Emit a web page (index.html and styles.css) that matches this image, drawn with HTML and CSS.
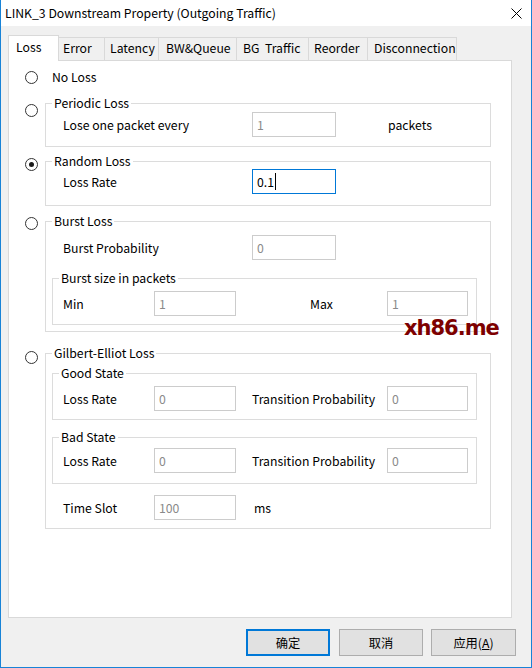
FILE: index.html
```html
<!DOCTYPE html>
<html lang="zh-CN">
<head>
    <meta charset="UTF-8">
    <title>LINK_3 Downstream Property (Outgoing Traffic)</title>
    <link rel="stylesheet" href="styles.css">
</head>
<body>
    <div class="window">
        <div class="titlebar">
            <span class="title">LINK_3 Downstream Property (Outgoing Traffic)</span>
            <svg class="close" width="11" height="11" viewBox="0 0 11 11">
                <path d="M0.5 0.5 L10.5 10.5 M10.5 0.5 L0.5 10.5" stroke="#000" stroke-width="1" fill="none"/>
            </svg>
        </div>
        <div class="dialog">
            <div class="tabs">
                <div class="tab tab-loss active">Loss</div>
                <div class="tab tab-error">Error</div>
                <div class="tab tab-latency">Latency</div>
                <div class="tab tab-bw">BW&amp;Queue</div>
                <div class="tab tab-bg">BG&nbsp;&nbsp;Traffic</div>
                <div class="tab tab-reorder">Reorder</div>
                <div class="tab tab-disc">Disconnection</div>
            </div>
            <div class="panel">
                <!-- no loss -->
                <div class="option option-plain">
                    <span class="radio"></span>
                    <span>No Loss</span>
                </div>

                <!-- periodic -->
                <div class="option option-periodic">
                    <span class="radio"></span>
                    <fieldset class="group group-periodic">
                        <legend>Periodic Loss</legend>
                        <div class="row">
                            <span class="label-wide">Lose one packet every</span>
                            <div class="field">1</div>
                            <span class="unit">packets</span>
                        </div>
                    </fieldset>
                </div>

                <!-- random -->
                <div class="option option-random">
                    <span class="radio checked"></span>
                    <fieldset class="group group-random">
                        <legend>Random Loss</legend>
                        <div class="row">
                            <span class="label-wide">Loss Rate</span>
                            <div class="field focus">0.1<span class="caret"></span></div>
                        </div>
                    </fieldset>
                </div>

                <!-- burst -->
                <div class="option option-burst">
                    <span class="radio"></span>
                    <fieldset class="group group-burst">
                        <legend>Burst Loss</legend>
                        <div class="row">
                            <span class="label-wide">Burst Probability</span>
                            <div class="field">0</div>
                        </div>
                        <fieldset class="subgroup subgroup-size">
                            <legend>Burst size in packets</legend>
                            <div class="subrow">
                                <span class="label-short">Min</span>
                                <div class="field field-short">1</div>
                                <span class="label-second label-max">Max</span>
                                <div class="field field-last">1</div>
                            </div>
                        </fieldset>
                    </fieldset>
                </div>

                <!-- gilbert-elliot -->
                <div class="option option-gilbert">
                    <span class="radio"></span>
                    <fieldset class="group group-gilbert">
                        <legend>Gilbert-Elliot Loss</legend>
                        <fieldset class="subgroup subgroup-good">
                            <legend>Good State</legend>
                            <div class="subrow">
                                <span class="label-short">Loss Rate</span>
                                <div class="field field-short">0</div>
                                <span class="label-second">Transition Probability</span>
                                <div class="field field-last">0</div>
                            </div>
                        </fieldset>
                        <fieldset class="subgroup subgroup-bad">
                            <legend>Bad State</legend>
                            <div class="subrow">
                                <span class="label-short">Loss Rate</span>
                                <div class="field field-short">0</div>
                                <span class="label-second">Transition Probability</span>
                                <div class="field field-last">0</div>
                            </div>
                        </fieldset>
                        <div class="row row-slot">
                            <span class="label-short">Time Slot</span>
                            <div class="field field-short">100</div>
                            <span class="unit-ms">ms</span>
                        </div>
                    </fieldset>
                </div>
            </div>
            <div class="buttons">
                <div class="btn btn-default">确定</div>
                <div class="btn">取消</div>
                <div class="btn">应用(<u>A</u>)</div>
            </div>
        </div>
        <div class="watermark">xh86.me</div>
    </div>
</body>
</html>
```

FILE: styles.css
```css
body {
    margin: 0;
    font-family: "Noto Sans CJK SC", "Noto Sans", sans-serif;
    font-size: 12.25px;
    color: #000;
    background: #fff;
}
.window {
    position: relative;
    width: 532px;
    height: 668px;
    box-sizing: border-box;
    border: 1px solid #1883d7;
    border-top: 0;
    background: #f0f0f0;
}
.titlebar {
    height: 26px;
    background: #fff;
    display: flex;
    align-items: center;
    justify-content: space-between;
    padding: 0 9px 0 4px;
}
.close {
    display: block;
}
.dialog {
    padding: 9px 18px 0 7px;
}

/* tabs */
.tabs {
    display: flex;
    align-items: flex-end;
    height: 25px;
}
.tab {
    height: 23px;
    box-sizing: border-box;
    border: 1px solid #d9d9d9;
    border-bottom: 0;
    margin-left: -1px;
    padding-left: 5px;
    line-height: 21px;
    background: #f0f0f0;
    white-space: nowrap;
}
.tab.active {
    height: 26px;
    margin-left: 0;
    margin-bottom: -1px;
    line-height: 22px;
    background: #fff;
    position: relative;
    z-index: 1;
}
.tab-loss { width: 51px; padding-left: 7px; }
.tab-error { width: 47px; padding-left: 4px; }
.tab-latency { width: 55px; padding-left: 5px; }
.tab-bw { width: 79px; padding-left: 7px; }
.tab-bg { width: 73px; padding-left: 6px; }
.tab-reorder { width: 60px; padding-left: 5px; }
.tab-disc { width: 90px; padding-left: 6px; }

.panel {
    width: 504px;
    height: 558px;
    box-sizing: border-box;
    background: #fff;
    border: 1px solid #d9d9d9;
    padding: 8px 0 0 16px;
}

/* radio rows */
.option {
    display: flex;
    align-items: flex-start;
}
.option-plain {
    align-items: center;
    line-height: 16px;
}
.option-periodic { margin-top: 10px; }
.option-random { margin-top: 6px; }
.option-burst { margin-top: 7px; }
.option-gilbert { margin-top: 13px; }
.radio {
    flex: none;
    width: 13px;
    height: 13px;
    box-sizing: border-box;
    border: 1px solid #333;
    border-radius: 50%;
    margin-right: 7px;
    display: flex;
    align-items: center;
    justify-content: center;
}
.option-plain .radio { margin-right: 14px; }
.option-periodic .radio { margin-top: 9px; }
.option-random .radio { margin-top: 5px; }
.option-burst .radio { margin-top: 4px; }
.option-gilbert .radio { margin-top: 6px; }
.radio.checked::after {
    content: "";
    width: 5px;
    height: 5px;
    border-radius: 50%;
    background: #1a1a1a;
}

/* group boxes */
.group, .subgroup {
    margin: 0;
    padding: 0;
    min-width: 0;
    border: 1px solid #dcdcdc;
}
.group {
    width: 446px;
    box-sizing: border-box;
}
.subgroup {
    width: 425px;
    box-sizing: border-box;
    margin-left: 6px;
}
legend {
    margin-left: 6px;
    padding: 0 2px;
    line-height: 16px;
}
.group-periodic { padding: 1px 0 9px; }
.group-random { padding: 0 0 11px; }
.group-burst { padding: 6px 0 6px; }
.group-gilbert { padding: 0 0 8px; }
.subgroup-size { margin-top: 10px; padding: 5px 0 8px; }
.subgroup-good { margin-top: 4px; padding: 5px 0 8px; }
.subgroup-bad { margin-top: 9px; padding: 3px 0 10px; }

.row, .subrow {
    display: flex;
    align-items: center;
    height: 25px;
}
.row {
    padding-left: 17px;
}
.subrow {
    padding-left: 10px;
}
.row-slot {
    margin-top: 11px;
}
.label-wide {
    width: 189px;
    flex: none;
}
.label-short {
    width: 91px;
    flex: none;
}
.label-second {
    width: 135px;
    margin-left: 16px;
    flex: none;
}
.label-max {
    width: 77px;
    padding-left: 58px;
}
.unit {
    margin-left: 52px;
}
.unit-ms {
    margin-left: 18px;
}

/* edit boxes */
.field {
    flex: none;
    width: 84px;
    height: 25px;
    box-sizing: border-box;
    border: 1px solid #cccccc;
    background: #fff;
    color: #8a8a8a;
    padding: 0 4px;
    display: flex;
    align-items: center;
}
.field-short {
    width: 82px;
}
.field-last {
    width: 81px;
}
.field.focus {
    border-color: #0078d7;
    color: #000;
}
.caret {
    display: inline-block;
    width: 1px;
    height: 17px;
    background: #000;
    margin-left: 1px;
}

/* buttons */
.buttons {
    display: flex;
    justify-content: flex-end;
    margin: 11px -3px 0 0;
}
.btn {
    width: 84px;
    height: 27px;
    box-sizing: border-box;
    border: 1px solid #adadad;
    background: #e1e1e1;
    display: flex;
    align-items: center;
    justify-content: center;
    margin-left: 9px;
}
.btn:last-child {
    width: 85px;
    margin-left: 8px;
}
.btn-default {
    border: 2px solid #0078d7;
}
.btn u {
    text-decoration-thickness: 1px;
    text-underline-offset: 1px;
}

.watermark {
    position: absolute;
    left: 403px;
    top: 316px;
    font-family: "DejaVu Sans", sans-serif;
    font-weight: bold;
    font-size: 21px;
    color: #7d0000;
    letter-spacing: -1px;
}
```
